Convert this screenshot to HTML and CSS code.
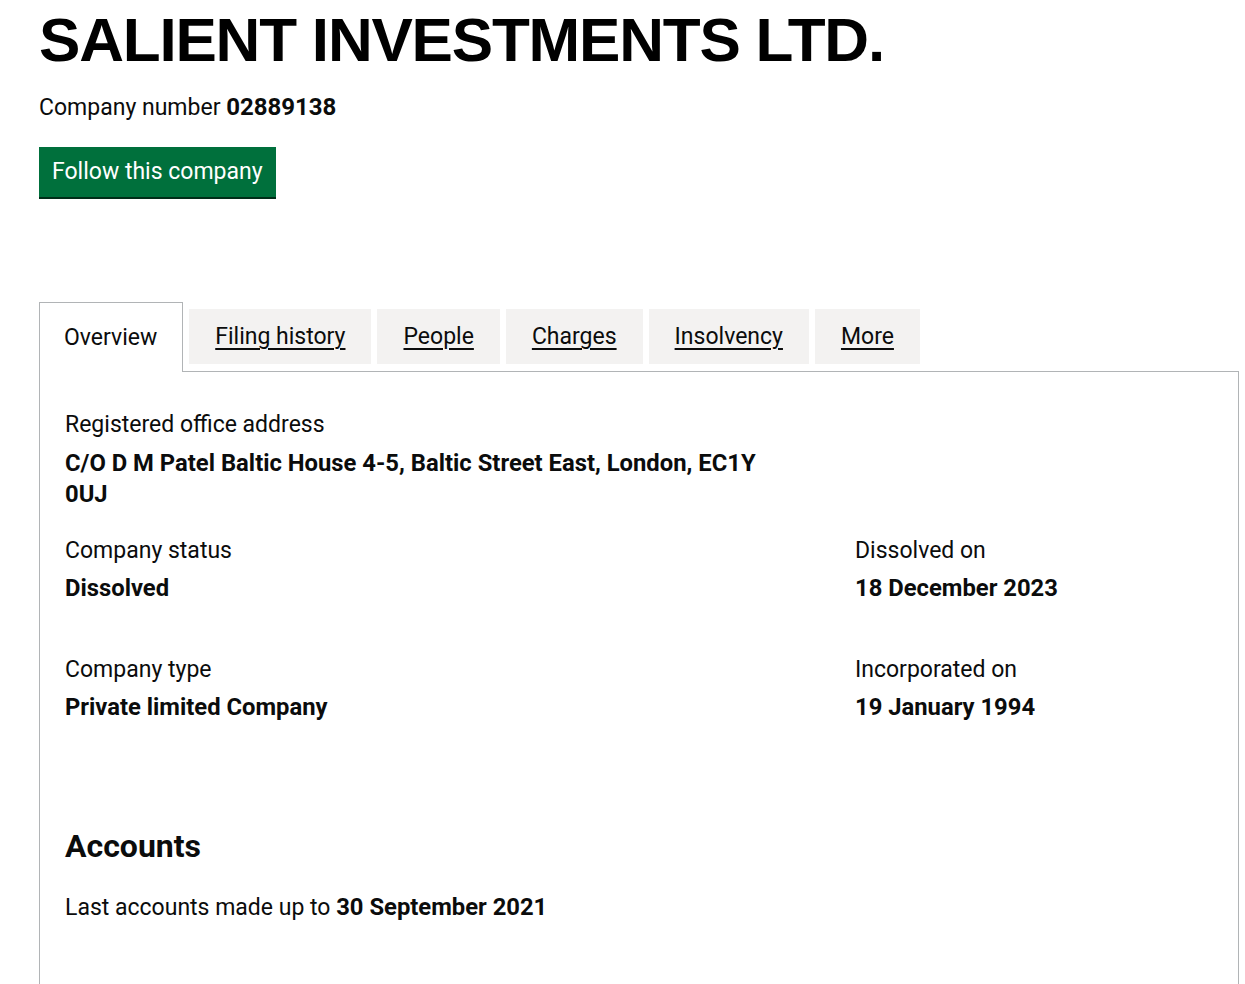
FILE: index.html
```html
<!DOCTYPE html>
<html lang="en">
<head>
<meta charset="utf-8">
<title>SALIENT INVESTMENTS LTD.</title>
<link rel="stylesheet" href="styles.css">
</head>
<body>
<main class="page">
  <h1 class="company-name">SALIENT INVESTMENTS LTD.</h1>
  <p class="company-number">Company number <strong>02889138</strong></p>
  <a class="button" href="#">Follow this company</a>

  <div class="tabs">
    <ul class="tab-list">
      <li class="tab tab-active"><span>Overview</span></li>
      <li class="tab"><a href="#">Filing history</a></li>
      <li class="tab"><a href="#">People</a></li>
      <li class="tab"><a href="#">Charges</a></li>
      <li class="tab"><a href="#">Insolvency</a></li>
      <li class="tab"><a href="#">More</a></li>
    </ul>
    <section class="panel">
      <dl class="address">
        <dt>Registered office address</dt>
        <dd>C/O D M Patel Baltic House 4-5, Baltic Street East, London, EC1Y 0UJ</dd>
      </dl>
      <div class="row">
        <dl class="col-left">
          <dt>Company status</dt>
          <dd>Dissolved</dd>
        </dl>
        <dl class="col-right">
          <dt>Dissolved on</dt>
          <dd>18 December 2023</dd>
        </dl>
      </div>
      <div class="row">
        <dl class="col-left">
          <dt>Company type</dt>
          <dd>Private limited Company</dd>
        </dl>
        <dl class="col-right">
          <dt>Incorporated on</dt>
          <dd>19 January 1994</dd>
        </dl>
      </div>
      <h2 class="section-heading">Accounts</h2>
      <p class="body-text">Last accounts made up to <strong>30 September 2021</strong></p>
    </section>
  </div>
</main>
</body>
</html>
```

FILE: styles.css
```css
* { box-sizing: border-box; }
html, body { margin: 0; padding: 0; background: #fff; }
body {
  font-family: Roboto, "Noto Sans", "Liberation Sans", sans-serif;
  color: #0b0c0c;
  font-size: 23px;
}
.page {
  padding: 0 6px 0 39px;
}
.company-name {
  font-family: "Liberation Sans", Arial, sans-serif;
  font-weight: 700;
  font-size: 62px;
  letter-spacing: -1.2px;
  line-height: 1;
  margin: 9px 0 0;
  color: #000;
}
.company-number {
  margin: 22px 0 0;
  line-height: 30px;
  font-size: 23px;
}
.company-number strong { font-weight: 700; font-size: 24px; line-height: 1; }
.button {
  display: inline-block;
  margin-top: 24px;
  background: #00703c;
  color: #fff;
  text-decoration: none;
  font-size: 23px;
  line-height: 26px;
  padding: 12px 13px;
  height: 50px;
  box-shadow: 0 2px 0 #002d18;
}
.tabs { margin-top: 105px; }
.tab-list {
  list-style: none;
  margin: 0;
  padding: 0;
  display: flex;
  align-items: flex-start;
}
.tab {
  margin-right: 6px;
  margin-top: 7px;
  height: 55px;
  background: #f3f2f1;
  padding: 0 26px;
  display: flex;
  align-items: center;
  font-size: 23px;
}
.tab a { color: #0b0c0c; text-decoration: underline; text-underline-offset: 4px; text-decoration-thickness: 2px; }
.tab-active {
  margin-top: 0;
  height: 70px;
  margin-bottom: -1px;
  background: #fff;
  border: 1px solid #b1b4b6;
  border-bottom: 0;
  padding: 0 25px 0 24px;
  position: relative;
  z-index: 1;
}
.panel {
  border: 1px solid #b1b4b6;
  padding: 38px 25px 60px;
  min-height: 620px;
}
dl { margin: 0; }
dt { margin: 0; line-height: 30px; }
dd { margin: 7px 0 0; font-weight: 700; line-height: 31px; font-size: 23.8px; }
.address dd { margin-top: 8px; }
.address { max-width: 720px; }
.row { display: flex; margin-top: 26px; }
.row + .row { margin-top: 51px; }
.col-left { width: 790px; }
.col-right { flex: 1; }
.section-heading {
  font-size: 32px;
  font-weight: 700;
  margin: 103px 0 0;
  line-height: 40px;
}
.body-text { margin: 27px 0 0; line-height: 30px; }
.body-text strong { font-weight: 700; font-size: 23.8px; line-height: 1; }
```
